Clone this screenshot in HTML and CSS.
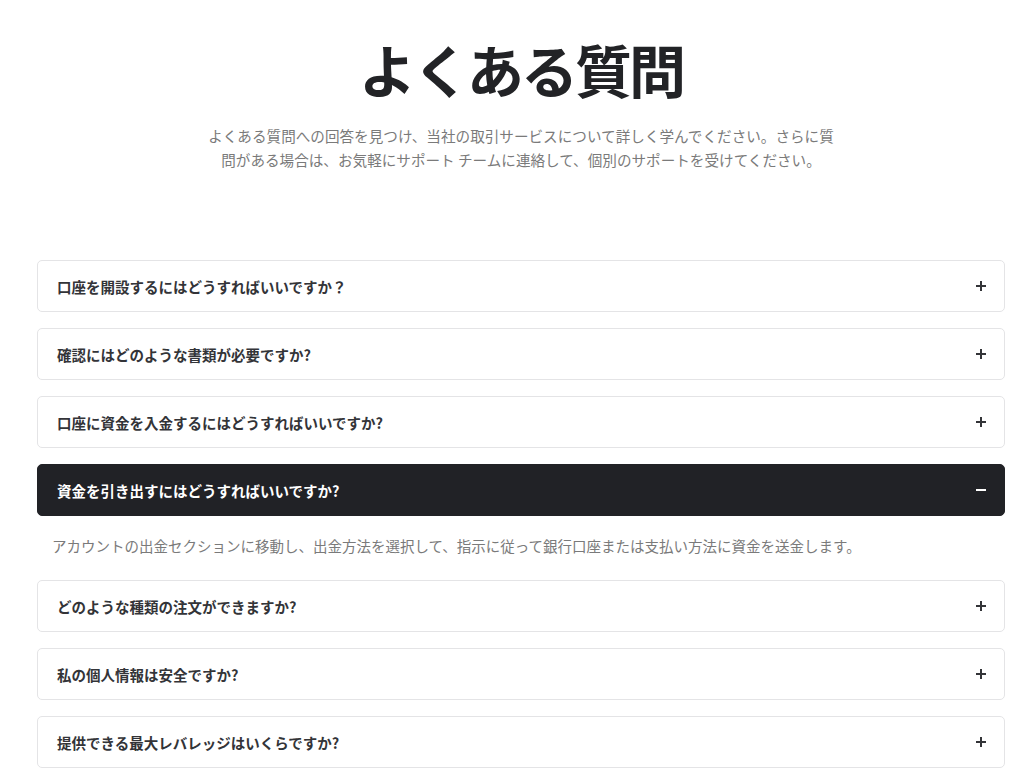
FILE: index.html
```html
<!DOCTYPE html>
<html lang="ja">
<head>
<meta charset="utf-8">
<title>よくある質問</title>
<link rel="stylesheet" href="styles.css">
</head>
<body>
<div class="page">
  <header class="hero">
    <h1 class="title">よくある質問</h1>
    <p class="lead">よくある質問への回答を見つけ、当社の取引サービスについて詳しく学んでください。さらに質問がある場合は、お気軽にサポート チームに連絡して、個別のサポートを受けてください。</p>
  </header>
  <section class="faq">
    <div class="item">
      <div class="q"><span>口座を開設するにはどうすればいいですか？</span><span class="icon plus"></span></div>
    </div>
    <div class="item">
      <div class="q"><span>確認にはどのような書類が必要ですか?</span><span class="icon plus"></span></div>
    </div>
    <div class="item">
      <div class="q"><span>口座に資金を入金するにはどうすればいいですか?</span><span class="icon plus"></span></div>
    </div>
    <div class="item open">
      <div class="q"><span>資金を引き出すにはどうすればいいですか?</span><span class="icon minus"></span></div>
      <div class="a">アカウントの出金セクションに移動し、出金方法を選択して、指示に従って銀行口座または支払い方法に資金を送金します。</div>
    </div>
    <div class="item">
      <div class="q"><span>どのような種類の注文ができますか?</span><span class="icon plus"></span></div>
    </div>
    <div class="item">
      <div class="q"><span>私の個人情報は安全ですか?</span><span class="icon plus"></span></div>
    </div>
    <div class="item">
      <div class="q"><span>提供できる最大レバレッジはいくらですか?</span><span class="icon plus"></span></div>
    </div>
  </section>
</div>
</body>
</html>
```

FILE: styles.css
```css
html, body {
  margin: 0;
  padding: 0;
  background: #ffffff;
}
body {
  font-family: "Noto Sans CJK JP", "Noto Sans", "Liberation Sans", sans-serif;
  color: #222326;
}
.page {
  padding: 31px 19px 40px 37px;
}
.hero {
  display: flex;
  flex-direction: column;
  align-items: center;
  text-align: center;
}
.title {
  margin: 0;
  font-size: 57px;
  line-height: 74px;
  font-weight: 700;
  letter-spacing: -3px;
  color: #222326;
}
.lead {
  margin: 19px 0 0;
  max-width: 640px;
  font-size: 14.6px;
  line-height: 24px;
  color: #7a7a7a;
}
.faq {
  margin-top: 88px;
  display: flex;
  flex-direction: column;
  gap: 16px;
}
.q {
  box-sizing: border-box;
  height: 52px;
  display: flex;
  align-items: center;
  justify-content: space-between;
  padding: 0 18px 0 19px;
  border: 1px solid #e4e4e6;
  border-radius: 5px;
  background: #ffffff;
  font-size: 14.5px;
  font-weight: 700;
  color: #333438;
}
.open .q {
  background: #212226;
  border-color: #212226;
  color: #ffffff;
}
.a {
  padding: 18px 15px 6px;
  font-size: 14.5px;
  line-height: 24px;
  color: #7a7a7a;
}
.icon {
  position: relative;
  width: 10px;
  height: 10px;
  flex: none;
}
.icon::before,
.icon::after {
  content: "";
  position: absolute;
  background: #333438;
}
.icon::before {
  left: 0;
  top: 4px;
  width: 10px;
  height: 2px;
}
.plus::after {
  left: 4px;
  top: 0;
  width: 2px;
  height: 10px;
}
.minus::before {
  background: #ffffff;
}
.minus::after {
  display: none;
}
```
